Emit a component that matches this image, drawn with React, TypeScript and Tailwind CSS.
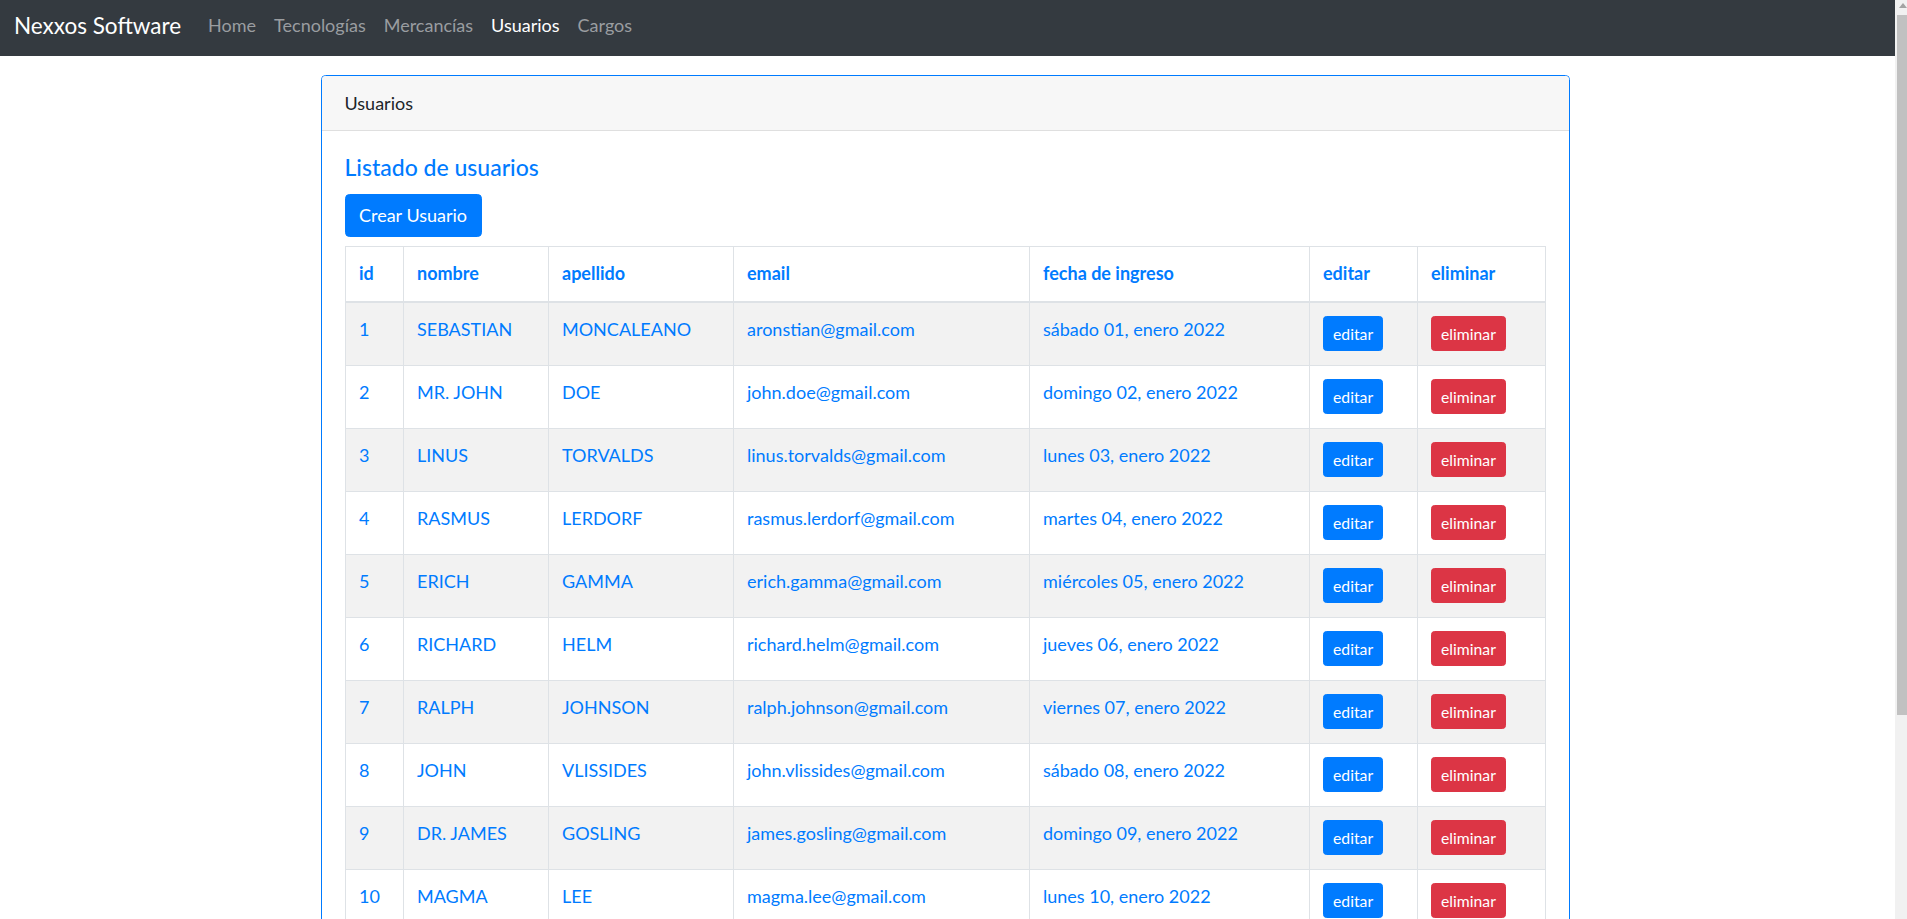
import React from "react";

type Usuario = {
  id: number;
  nombre: string;
  apellido: string;
  email: string;
  fecha: string;
};

const usuarios: Usuario[] = [
  { id: 1, nombre: "SEBASTIAN", apellido: "MONCALEANO", email: "aronstian@gmail.com", fecha: "sábado 01, enero 2022" },
  { id: 2, nombre: "MR. JOHN", apellido: "DOE", email: "john.doe@gmail.com", fecha: "domingo 02, enero 2022" },
  { id: 3, nombre: "LINUS", apellido: "TORVALDS", email: "linus.torvalds@gmail.com", fecha: "lunes 03, enero 2022" },
  { id: 4, nombre: "RASMUS", apellido: "LERDORF", email: "rasmus.lerdorf@gmail.com", fecha: "martes 04, enero 2022" },
  { id: 5, nombre: "ERICH", apellido: "GAMMA", email: "erich.gamma@gmail.com", fecha: "miércoles 05, enero 2022" },
  { id: 6, nombre: "RICHARD", apellido: "HELM", email: "richard.helm@gmail.com", fecha: "jueves 06, enero 2022" },
  { id: 7, nombre: "RALPH", apellido: "JOHNSON", email: "ralph.johnson@gmail.com", fecha: "viernes 07, enero 2022" },
  { id: 8, nombre: "JOHN", apellido: "VLISSIDES", email: "john.vlissides@gmail.com", fecha: "sábado 08, enero 2022" },
  { id: 9, nombre: "DR. JAMES", apellido: "GOSLING", email: "james.gosling@gmail.com", fecha: "domingo 09, enero 2022" },
  { id: 10, nombre: "MAGMA", apellido: "LEE", email: "magma.lee@gmail.com", fecha: "lunes 10, enero 2022" },
];

const links = ["Home", "Tecnologías", "Mercancías", "Usuarios", "Cargos"];
const headers = ["id", "nombre", "apellido", "email", "fecha de ingreso", "editar", "eliminar"];
const colWidths = ["w-[58px]", "w-[145px]", "w-[185px]", "w-[296px]", "w-[280px]", "w-[108px]", "w-[128px]"];

function Navbar() {
  return (
    <nav className="h-[56px] bg-[#343a40] flex items-center pl-[14px] pb-[5px]">
      <span className="text-[22.5px] leading-[30px] text-white mr-[18px]">Nexxos Software</span>
      <ul className="flex items-center">
        {links.map((l) => (
          <li key={l}>
            <a className={`block px-[9px] text-[18px] leading-[27px] ${l === "Usuarios" ? "text-white" : "text-[#9a9da0]"}`}>
              {l}
            </a>
          </li>
        ))}
      </ul>
    </nav>
  );
}

function Scrollbar() {
  return (
    <div className="w-[12px] shrink-0 bg-[#f1f1f1] flex flex-col">
      <div className="h-[15px] flex items-center justify-end">
        <svg width="8" height="5" viewBox="0 0 8 5" className="mt-[-4px]">
          <path d="M0 5 L4 0 L8 5 Z" fill="#a3a3a3" />
        </svg>
      </div>
      <div className="ml-[2px] h-[700px] bg-[#c1c1c1]" />
    </div>
  );
}

export default function App() {
  return (
    <div className="h-[919px] overflow-hidden flex bg-white" style={{ fontFamily: "Lato, 'Open Sans', sans-serif" }}>
      <div className="flex-1 min-w-0">
        <Navbar />
        <div className="ml-[321px] mt-[19px] w-[1249px] border border-[#007bff] rounded-[4.5px] overflow-hidden">
          <div className="bg-[#f7f7f7] border-b border-[#dfdfdf] px-[22.5px] py-[13.5px] text-[18px] leading-[27px] text-[#212529]">
            Usuarios
          </div>
          <div className="px-[22.5px] pt-[22.5px] pb-[22.5px]">
            <h5 className="text-[23px] leading-[27px] font-medium text-[#007bff] mb-[13.5px]">Listado de usuarios</h5>
            <button className="bg-[#007bff] text-white text-[18px] leading-[27px] px-[13.5px] py-[6.75px] rounded-[4.5px] border border-[#007bff] mb-[9px]">
              Crear Usuario
            </button>
            <table className="table-fixed w-[1200px] border-collapse text-[18px] leading-[27px] text-[#007bff]">
              <colgroup>
                {colWidths.map((w, i) => (
                  <col key={i} className={w} />
                ))}
              </colgroup>
              <thead>
                <tr>
                  {headers.map((h) => (
                    <th
                      key={h}
                      className="text-left font-bold align-bottom border border-[#dee2e6] border-b-2 px-[13.5px] py-[13.5px]"
                    >
                      {h}
                    </th>
                  ))}
                </tr>
              </thead>
              <tbody>
                {usuarios.map((u, i) => (
                  <tr key={u.id} className={i % 2 === 0 ? "bg-[#f2f2f2]" : "bg-white"}>
                    <td className="align-top border border-[#dee2e6] px-[13.5px] py-[13.5px]">{u.id}</td>
                    <td className="align-top border border-[#dee2e6] px-[13.5px] py-[13.5px]">{u.nombre}</td>
                    <td className="align-top border border-[#dee2e6] px-[13.5px] py-[13.5px]">{u.apellido}</td>
                    <td className="align-top border border-[#dee2e6] px-[13.5px] py-[13.5px]">{u.email}</td>
                    <td className="align-top border border-[#dee2e6] px-[13.5px] py-[13.5px]">{u.fecha}</td>
                    <td className="align-top border border-[#dee2e6] px-[13.5px] py-[13.5px]">
                      <button className="block h-[35px] px-[9px] bg-[#007bff] border border-[#007bff] text-white text-[15.75px] leading-[23px] rounded-[3.5px]">
                        editar
                      </button>
                    </td>
                    <td className="align-top border border-[#dee2e6] px-[13.5px] py-[13.5px]">
                      <button className="block h-[35px] px-[9px] bg-[#dc3545] border border-[#dc3545] text-white text-[15.75px] leading-[23px] rounded-[3.5px]">
                        eliminar
                      </button>
                    </td>
                  </tr>
                ))}
              </tbody>
            </table>
          </div>
        </div>
      </div>
      <Scrollbar />
    </div>
  );
}
